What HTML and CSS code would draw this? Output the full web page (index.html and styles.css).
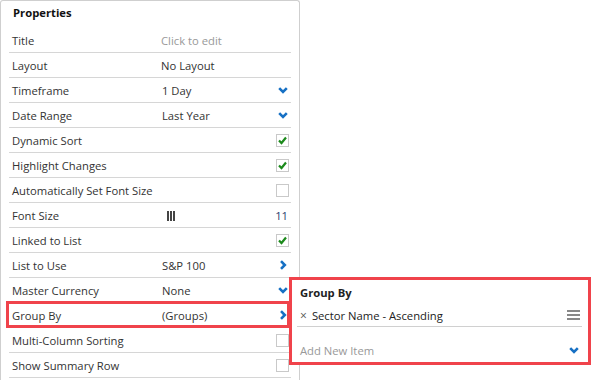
FILE: index.html
```html
<!DOCTYPE html>
<html lang="en">
<head>
  <meta charset="UTF-8">
  <title>Properties</title>
  <link rel="stylesheet" href="styles.css">
</head>
<body>
  <div class="panel">
    <div class="panel-title">Properties</div>

    <div class="row"><span class="label">Title</span><span class="value muted">Click to edit</span></div>
    <div class="row"><span class="label">Layout</span><span class="value">No Layout</span></div>
    <div class="row"><span class="label">Timeframe</span><span class="value sel">1 Day</span>
      <svg class="chev" width="10" height="7" viewBox="0 0 10 7"><polyline points="1.2,1.2 5,5 8.8,1.2" /></svg></div>
    <div class="row"><span class="label">Date Range</span><span class="value sel">Last Year</span>
      <svg class="chev" width="10" height="7" viewBox="0 0 10 7"><polyline points="1.2,1.2 5,5 8.8,1.2" /></svg></div>
    <div class="row"><span class="label">Dynamic Sort</span><span class="value"></span>
      <span class="check on"><svg width="11" height="11" viewBox="0 0 11 11"><polyline points="2,5.5 4.5,8 9,2.5" /></svg></span></div>
    <div class="row"><span class="label">Highlight Changes</span><span class="value"></span>
      <span class="check on"><svg width="11" height="11" viewBox="0 0 11 11"><polyline points="2,5.5 4.5,8 9,2.5" /></svg></span></div>
    <div class="row"><span class="label">Automatically Set Font Size</span><span class="value"></span>
      <span class="check"></span></div>
    <div class="row"><span class="label">Font Size</span>
      <span class="value"><span class="grip"><i></i><i></i><i></i></span></span>
      <span class="num">11</span></div>
    <div class="row"><span class="label">Linked to List</span><span class="value"></span>
      <span class="check on"><svg width="11" height="11" viewBox="0 0 11 11"><polyline points="2,5.5 4.5,8 9,2.5" /></svg></span></div>
    <div class="row"><span class="label">List to Use</span><span class="value sel">S&amp;P 100</span>
      <svg class="chev" width="10" height="10" viewBox="0 0 10 10"><polyline points="3,1.2 6.8,5 3,8.8" /></svg></div>
    <div class="row"><span class="label">Master Currency</span><span class="value sel">None</span>
      <svg class="chev" width="10" height="7" viewBox="0 0 10 7"><polyline points="1.2,1.2 5,5 8.8,1.2" /></svg></div>
    <div class="row marked"><span class="label">Group By</span><span class="value sel">(Groups)</span>
      <svg class="chev" width="10" height="10" viewBox="0 0 10 10"><polyline points="3,1.2 6.8,5 3,8.8" /></svg></div>
    <div class="row"><span class="label">Multi-Column Sorting</span><span class="value"></span>
      <span class="check"></span></div>
    <div class="row"><span class="label">Show Summary Row</span><span class="value"></span>
      <span class="check"></span></div>
  </div>

  <div class="popup">
    <div class="popup-title">Group By</div>
    <div class="popup-item">
      <span class="remove">&times;</span>
      <span class="item-text">Sector Name - Ascending</span>
      <span class="handle"><i></i><i></i><i></i></span>
    </div>
    <div class="popup-add">
      <span>Add New Item</span>
      <svg class="chev" width="10" height="7" viewBox="0 0 10 7"><polyline points="1.2,1.2 5,5 8.8,1.2" /></svg>
    </div>
  </div>
</body>
</html>
```

FILE: styles.css
```css
body {
  margin: 0;
  font-family: "Open Sans", "Liberation Sans", sans-serif;
  font-size: 11.25px;
  color: #333;
  background-color: #fff;
  position: relative;
  height: 380px;
  overflow: hidden;
}

.panel {
  width: 282px;
  height: 400px;
  padding: 0 8px;
  border: 1px solid #cfcfcf;
  border-bottom: none;
  border-radius: 3px 3px 0 0;
}

.panel-title {
  height: 27px;
  line-height: 23px;
  padding-left: 4px;
  font-weight: bold;
  color: #111;
}

.row {
  display: flex;
  align-items: center;
  height: 24px;
  border-bottom: 1px solid #d6d6d6;
  padding: 0 2px 0 3px;
  position: relative;
}

.label {
  width: 149px;
  white-space: nowrap;
}

.value {
  flex: 1;
  white-space: nowrap;
}

.value.sel {
  padding-left: 1px;
}

.muted {
  color: #999;
}

.chev {
  margin-right: 1px;
}

.chev polyline {
  fill: none;
  stroke: #1670c4;
  stroke-width: 2.6;
}

.check {
  width: 11px;
  height: 11px;
  border: 1px solid #c9c9c9;
  background-color: #fff;
  display: flex;
  align-items: center;
  justify-content: center;
}

.check polyline {
  fill: none;
  stroke: #1b8a1b;
  stroke-width: 2.2;
}

.grip {
  display: inline-flex;
  gap: 1px;
  margin-left: 6px;
  vertical-align: middle;
}

.grip i {
  width: 2px;
  height: 10px;
  background-color: #444;
}

.num {
  color: #2c3e6e;
  margin-right: 1px;
}

.marked::after {
  content: "";
  position: absolute;
  left: -3px;
  right: 1px;
  top: -2px;
  bottom: -1px;
  border: 3px solid #f0434b;
}

.popup {
  position: absolute;
  left: 289px;
  top: 277px;
  width: 285px;
  height: 82px;
  border: 3px solid #f0434b;
  background-color: #fff;
  padding: 0 6px 0 5px;
}

.popup-title {
  font-weight: bold;
  color: #222;
  height: 24px;
  line-height: 25px;
  padding-left: 3px;
}

.popup-item {
  display: flex;
  align-items: center;
  height: 22px;
  border-bottom: 1px solid #d0d0d0;
  padding: 0 2px 0 3px;
}

.remove {
  color: #555;
  font-size: 12px;
  margin-right: 5px;
}

.item-text {
  flex: 1;
  color: #222;
}

.handle {
  display: flex;
  flex-direction: column;
  gap: 2px;
}

.handle i {
  width: 13px;
  height: 2px;
  background-color: #888;
}

.popup-add {
  display: flex;
  align-items: center;
  justify-content: space-between;
  height: 22px;
  margin-top: 12px;
  padding: 0 2px 0 3px;
  color: #999;
}
```
